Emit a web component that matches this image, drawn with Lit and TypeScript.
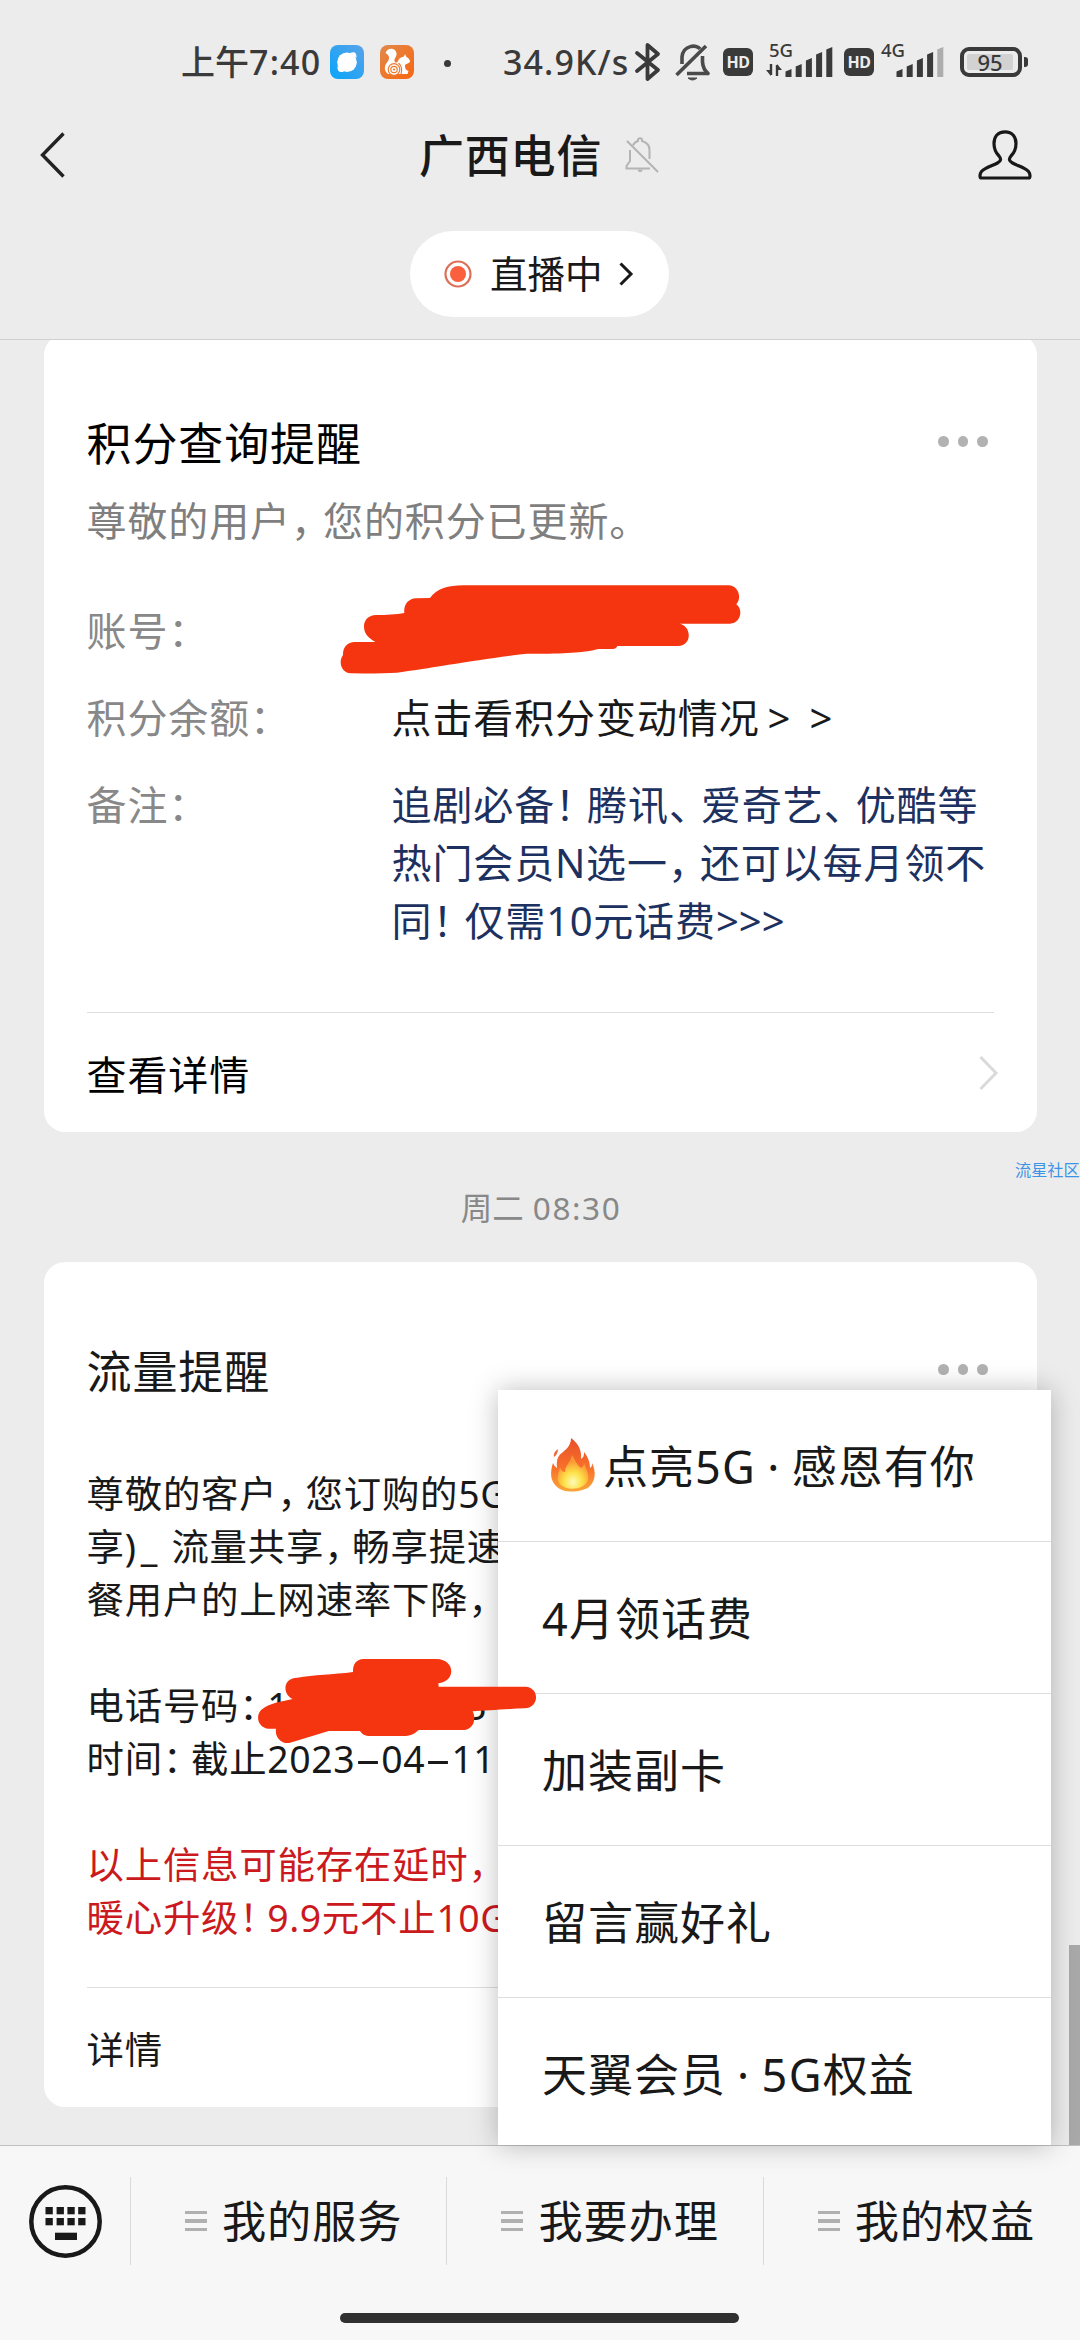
import { LitElement, html, svg, css } from "lit";
import { customElement } from "lit/decorators.js";

const PARTS = /([，、：！。]|-|[A-Za-z0-9.:()_/·]+|>+)/;

/** Splits mixed text so that punctuation is set tight and latin runs get their own face. */
const mix = (text: string) =>
  text.split(PARTS).map((part) => {
    if (!part) return "";
    if (/^[，、：！。]$/.test(part)) return html`<span class="p">${part}</span>`;
    if (part === "-") return html`<span class="l dash">-</span>`;
    if (part.includes("_")) return html`<span class="l loose">${part}</span>`;
    if (part.startsWith(">")) return html`<span class="l gt">${part}</span>`;
    if (PARTS.test(part)) return html`<span class="l">${part}</span>`;
    return part;
  });

const bars = (tops: number[], weak: number) =>
  tops.map(
    (top, i) =>
      svg`<path d="M${i * 10.2} ${top + 2.5} L${i * 10.2 + 6} ${top} V${30} H${i * 10.2} Z" fill=${i >= weak ? "#adadad" : "#3a3a3a"}/>`
  );

const FIELDS = [
  { label: "账号：", value: [""], cls: "" },
  { label: "积分余额：", value: ["点击看积分变动情况> >"], cls: "wide" },
  {
    label: "备注：",
    value: ["追剧必备！腾讯、爱奇艺、优酷等", "热门会员N选一，还可以每月领不", "同！仅需10元话费>>>"],
    cls: "link",
  },
];

const MENU = ["点亮5G · 感恩有你", "4月领话费", "加装副卡", "留言赢好礼", "天翼会员 · 5G权益"];
const TABS = ["我的服务", "我要办理", "我的权益"];

@customElement("app-root")
export class AppRoot extends LitElement {
  static styles = css`
    :host {
      display: flex;
      flex-direction: column;
      position: relative;
      width: 1080px;
      height: 2340px;
      overflow: hidden;
      background: #ececec;
      color: #191919;
      font-family: "Noto Sans CJK SC", "Noto Sans", sans-serif;
      white-space: nowrap;
    }
    * { box-sizing: border-box; }
    svg { display: block; flex: none; overflow: visible; }
    .p { letter-spacing: -0.2em; }
    .l { font-family: "Noto Sans", sans-serif; line-height: 0; letter-spacing: 0.015em; }
    .gt { letter-spacing: 0; }
    .loose { letter-spacing: 0.13em; }
    .dash { display: inline-block; width: 0.7em; text-align: center; transform: scaleX(2.2); letter-spacing: 0; }

    .header { height: 340px; flex: none; border-bottom: 1.5px solid #d0d0d0; }
    .status {
      display: flex;
      align-items: center;
      height: 124px;
      padding-left: 181px;
      color: #3a3a3a;
      font-size: 34px;
      font-weight: 500;
    }
    .clock { width: 149px; line-height: 50px; margin-top: -3px; }
    .clock .l { letter-spacing: 1.2px; }
    .app { margin-left: 16px; }
    .app.first { margin-left: 0; }
    .dot { width: 7px; height: 7px; border-radius: 50%; background: #3a3a3a; margin: 2px 52px 0 30px; }
    .speed { width: 130px; line-height: 50px; margin-top: -3px; }
    .speed .l { letter-spacing: 1.1px; }
    .hd {
      width: 30px;
      height: 28px;
      border-radius: 6px;
      background: #3a3a3a;
      color: #ececec;
      font: 700 16px/28px "Noto Sans", sans-serif;
      text-align: center;
      letter-spacing: -0.5px;
    }
    .signal { position: relative; width: 66px; height: 30px; }
    .signal .gen {
      position: absolute;
      top: -8px;
      font: 500 18.5px/22px "Noto Sans", sans-serif;
    }
    .battery {
      position: relative;
      width: 62px;
      height: 30px;
      border: 4px solid #3a3a3a;
      border-radius: 9px;
      padding: 3px;
      margin-left: 13px;
    }
    .level {
      width: 46px;
      height: 16px;
      background: #d2d2d2;
      border-radius: 2px;
      font: 500 22px/16px "Noto Sans", sans-serif;
      text-align: center;
    }
    .tip { width: 4px; height: 10px; border-radius: 0 3px 3px 0; background: #3a3a3a; margin-left: 2px; }

    .nav { display: flex; align-items: center; height: 62px; padding: 0 48px 0 40px; }
    .title { margin-left: 354px; font-size: 45px; line-height: 62px; font-weight: 500; letter-spacing: 0.8px; margin-top: -3px; }
    .mute { margin: 0 0 0 23px; }
    .person { margin-left: auto; }
    .live {
      display: flex;
      align-items: center;
      width: 259px;
      height: 86px;
      margin: 45px 0 0 410px;
      padding-left: 34px;
      border-radius: 43px;
      background: #fff;
      font-size: 37.5px;
    }
    .live span { margin: -4px 16px 0 18px; line-height: 50px; }

    .chat { flex: none; height: 1805px; overflow: hidden; display: flex; flex-direction: column; }
    .card {
      flex: none;
      width: 993px;
      margin-left: 43.5px;
      padding: 78px 43px 0;
      border-radius: 21px;
      background: #fff;
    }
    .card.one { margin-top: -6px; height: 798px; }
    .card.two { height: 845px; }
    .head { display: flex; justify-content: space-between; align-items: center; height: 60px; }
    .head h2 { margin: 0; font-size: 45px; font-weight: 400; line-height: 60px; letter-spacing: 0.9px; color: #000; }
    .two .head h2 { color: #191919; }
    .more { display: flex; gap: 9px; margin: 0 6px 1px 0; }
    .more i { width: 10.5px; height: 10.5px; border-radius: 50%; background: #b2b2b2; }
    .sub { margin-top: 19px; font-size: 40px; line-height: 56px; letter-spacing: 0.9px; color: #7f7f7f; }
    .fields { display: grid; gap: 29px; margin-top: 53px; font-size: 40px; line-height: 58px; letter-spacing: 0.9px; }
    .field { display: flex; min-height: 58px; }
    .label { width: 305px; color: #888; }
    .wide .l { margin-left: 8px; }
    .wide { word-spacing: 1px; }
    .link { color: #1d3160; }
    .foot {
      display: flex;
      align-items: center;
      justify-content: space-between;
      height: 120px;
      border-top: 1.5px solid #dedede;
      font-size: 40px;
      letter-spacing: 0.9px;
      color: #000;
    }
    .foot span { line-height: 56px; }
    .one .foot { margin-top: 64px; }
    .foot svg { margin-right: -4px; }
    .two .foot { margin-top: 44px; font-size: 37.4px; letter-spacing: 0.8px; color: #191919; }
    .time { flex: none; height: 40px; margin: 54px 0 36px; text-align: center; font-size: 31.5px; line-height: 40px; color: #888; word-spacing: 2px; }
    .time .l { letter-spacing: 1.6px; margin-right: -2px; }
    .body { margin-top: 66px; font-size: 37.4px; line-height: 53px; letter-spacing: 0.8px; }
    .line { height: 53px; }
    .body .p { letter-spacing: -0.25em; }
    .red { color: #cb1a1e; }
    .hidden-part { display: inline-block; width: 176px; }

    .footer {
      display: flex;
      height: 195px;
      flex: none;
      border-top: 1.5px solid #c0c0c0;
      background: #f7f7f7;
      padding: 31px 0 0 29px;
    }
    .kbd { width: 101px; padding-top: 8px; }
    .tab {
      display: flex;
      align-items: center;
      width: 316.4px;
      height: 88px;
      padding-left: 54px;
      border-left: 1.5px solid #dadada;
      font-size: 44.2px;
      letter-spacing: 0.9px;
    }
    .tab span { margin: -4px 0 0 15px; line-height: 60px; }
    .bars { display: grid; gap: 5.5px; width: 22px; }
    .bars i { height: 3.2px; background: #b0b0b0; }

    .menu {
      position: absolute;
      left: 498px;
      top: 1390px;
      width: 553px;
      height: 755px;
      background: #fff;
      box-shadow: 0 0 26px rgba(0, 0, 0, 0.26);
    }
    .item {
      display: flex;
      align-items: center;
      height: 152px;
      padding: 0 0 0 44px;
      border-bottom: 1.5px solid #dedede;
      font-size: 45px;
      letter-spacing: 1px;
    }
    .item:last-child { border-bottom: 0; }
    .item span.txt { line-height: 60px; margin-top: -2px; }
    .item .l { letter-spacing: 0.03em; }
    .fire { margin: 0 8px 2px 9px; }
    .scroll { position: absolute; left: 1069px; top: 1945px; width: 11px; height: 200px; background: #a9a9a9; }
    .mark { position: absolute; left: 1015px; top: 1157px; font-size: 16.2px; line-height: 24px; color: #3d94e6; }
    .scribble { position: absolute; }
    .s1 { left: 320px; top: 560px; }
    .s2 { left: 240px; top: 1640px; }
    .home { position: absolute; left: 340px; top: 2313px; width: 399px; height: 10px; border-radius: 5px; background: #303030; }
  `;

  private renderStatus() {
    return html`<div class="status">
      <div class="clock">上午<span class="l">7:40</span></div>
      <svg class="app first" width="34" height="34" viewBox="0 0 34 34">
        <defs><linearGradient id="b" x1="1" y1="0" x2="0" y2="1"><stop offset="0" stop-color="#5aa2e8"/><stop offset="1" stop-color="#08a5fa"/></linearGradient></defs>
        <rect width="34" height="34" rx="8" fill="url(#b)"/>
        <circle cx="17" cy="17.3" r="9.8" fill="#fff"/>
        <path d="M20 8 Q27 5 26.500 13 Z M14 26.500 Q7 29 7.500 21 Z" fill="#fff"/>
      </svg>
      <svg class="app" width="34" height="34" viewBox="0 0 34 34">
        <defs><linearGradient id="o" x1="0" y1="0" x2="1" y2="1"><stop offset="0" stop-color="#e08a4a"/><stop offset="1" stop-color="#f9660f"/></linearGradient></defs>
        <rect width="34" height="34" rx="8" fill="url(#o)"/>
        <path d="M5.500 8 C7 3 15 2 16.500 8 C17 12 14 13 14.500 16 C15 18 17 18 18 16 C19 13 22 12 24 11.500 L25 9 L26.500 12 C29 13 30 15 30 17 C28 19 26 18.500 25 20 C25 24 26 25 28.500 26 L27.500 29 H8 C4 26 4 21 7 17.500 C9 15 11 11 5.500 8Z" fill="#fff"/>
        <circle cx="14" cy="24.500" r="5.800" fill="#fff" stroke="#ee7a2e" stroke-width="1.200"/>
        <circle cx="14" cy="24.500" r="3.200" fill="none" stroke="#ee7a2e" stroke-width="1.200"/>
        <circle cx="14" cy="24.500" r="1.100" fill="#ee7a2e"/>
        <path d="M18.500 18 Q23 22 21 29" fill="none" stroke="#ee7a2e" stroke-width="1.100"/>
      </svg>
      <div class="dot"></div>
      <div class="speed"><span class="l">34.9K/s</span></div>
      <svg width="26" height="38" viewBox="0 0 26 38" style="margin-left:2px" fill="none" stroke="#3a3a3a" stroke-width="3.800" stroke-linejoin="round" stroke-linecap="round">
        <path d="M2 10 L23 27 L12.500 36 V2 L23 11 L2 28"/>
      </svg>
      <svg width="35" height="37" viewBox="0 0 35 37" style="margin-left:14px" fill="none" stroke="#4a4a4a" stroke-width="3.600" stroke-linejoin="round">
        <path d="M7 20 V13 C8 1 22 0 25 5"/>
        <path d="M27.500 12 V18 C28 24 30 27 33 29.500 H12"/>
        <path d="M1.500 31 L31 2"/>
        <path d="M13 34 H22 Q17.500 38 13 34Z" fill="#4a4a4a" stroke-width="1"/>
      </svg>
      <div class="hd" style="margin-left:13px">HD</div>
      <div class="signal" style="margin-left:13px">
        <span class="gen" style="left:3px">5G</span>
        <svg width="66" height="30" viewBox="0 0 66 30">
          <path d="M5 17 V28 M11 29 V18" stroke="#3a3a3a" stroke-width="2.400"/>
          <path d="M0 23 H5 V29Z M11 17 L16 23 H11Z" fill="#3a3a3a"/>
          <g transform="translate(19.500 0)">${bars([22, 17, 11, 5, 0], 9)}</g>
        </svg>
      </div>
      <div class="hd" style="margin-left:12px">HD</div>
      <div class="signal" style="margin-left:7px">
        <span class="gen" style="left:0">4G</span>
        <svg width="66" height="30" viewBox="0 0 66 30"><g transform="translate(15.500 0)">${bars([22, 17, 11, 5, 0], 4)}</g></svg>
      </div>
      <div class="battery"><div class="level">95</div></div>
      <div class="tip"></div>
    </div>`;
  }

  private renderHeader() {
    return html`<div class="header">
      ${this.renderStatus()}
      <div class="nav">
        <svg width="25" height="46" viewBox="0 0 25 46" fill="none" stroke="#222" stroke-width="3.400"><path d="M23.500 1.500 L2.500 23 L23.500 44.500"/></svg>
        <div class="title">广西电信</div>
        <svg class="mute" width="34" height="36" viewBox="0 0 34 36" fill="none" stroke="#b4b4b4" stroke-width="2">
          <path d="M8 8.500 C9 5.500 11.500 4.500 13 4 V3 C13 0.500 17 0.500 17 3 V4 C22 5.500 24.500 9 24.500 13 V22"/>
          <path d="M5 13 V24 L1.500 29 V31.500 H25"/>
          <path d="M13.500 32.500 Q15 36 17 32.500"/>
          <path d="M2 4 L33 35"/>
        </svg>
        <svg class="person" width="54" height="50" viewBox="0 0 54 50" fill="none" stroke="#181818" stroke-width="3.200" stroke-linejoin="round">
          <path d="M27 1.800 C19.500 1.800 16 7 16 13.500 C16 19 18 23 21 26 C23.500 29 23 31 19.500 33 C14 36 7 37.500 3.500 41.500 C1.500 44 1.500 48 3.500 48 H50.500 C52.500 48 52.500 44 50.500 41.500 C47 37.500 40 36 34.500 33 C31 31 30.500 29 33 26 C36 23 38 19 38 13.500 C38 7 34.500 1.800 27 1.800Z"/>
        </svg>
      </div>
      <div class="live">
        <svg width="28" height="28" viewBox="0 0 28 28"><circle cx="14" cy="14" r="12.500" fill="#fff" stroke="#dd6f58" stroke-width="2.200"/><circle cx="14" cy="14" r="8" fill="#fa5f3e"/></svg>
        <span>直播中</span>
        <svg width="14" height="24" viewBox="0 0 14 24" fill="none" stroke="#191919" stroke-width="3"><path d="M1.500 1.500 L12 12 L1.500 22.500"/></svg>
      </div>
    </div>`;
  }

  render() {
    return html`
      ${this.renderHeader()}
      <div class="chat">
        <div class="card one">
          <div class="head"><h2>积分查询提醒</h2><div class="more"><i></i><i></i><i></i></div></div>
          <div class="sub">${mix("尊敬的用户，您的积分已更新。")}</div>
          <div class="fields">
            ${FIELDS.map(
              (f) => html`<div class="field"><div class="label">${mix(f.label)}</div><div class=${f.cls}>${f.value.map((v) => html`<div>${mix(v)}</div>`)}</div></div>`
            )}
          </div>
          <div class="foot">
            <span>查看详情</span>
            <svg width="19" height="34" viewBox="0 0 19 34" fill="none" stroke="#dadada" stroke-width="3"><path d="M1.500 1 L17 17 L1.500 33"/></svg>
          </div>
        </div>
        <div class="time">周二 <span class="l">08:30</span></div>
        <div class="card two">
          <div class="head"><h2>流量提醒</h2><div class="more"><i></i><i></i><i></i></div></div>
          <div class="body">
            <div class="line">${mix("尊敬的客户，您订购的5G")}</div>
            <div class="line">${mix("享)_ 流量共享，畅享提速")}</div>
            <div class="line">${mix("餐用户的上网速率下降，")}</div>
            <div class="line"></div>
            <div class="line">${mix("电话号码：1")}<span class="hidden-part"></span><span class="l">3</span></div>
            <div class="line">${mix("时间：截止2023-04-11 0")}</div>
            <div class="line"></div>
            <div class="line red">${mix("以上信息可能存在延时，")}</div>
            <div class="line red">${mix("暖心升级！9.9元不止10G")}</div>
          </div>
          <div class="foot"><span>详情</span></div>
        </div>
      </div>
      <div class="footer">
        <div class="kbd">
          <svg width="73" height="73" viewBox="0 0 73 73" fill="#191919">
            <circle cx="36.500" cy="36.500" r="34.200" fill="none" stroke="#191919" stroke-width="4.500"/>
            ${[22, 33].map((y) => [16.5, 27.6, 38.4, 49.2].map((x) => svg`<rect x=${x} y=${y} width="7.300" height="7.300"/>`))}
            <rect x="26" y="47.700" width="22" height="7.300"/>
          </svg>
        </div>
        ${TABS.map((t) => html`<div class="tab"><div class="bars"><i></i><i></i><i></i></div><span>${t}</span></div>`)}
      </div>
      <div class="scroll"></div>
      <div class="menu">
        ${MENU.map(
          (m, i) => html`<div class="item">${i === 0
            ? html`<svg class="fire" width="44" height="54" viewBox="0 0 44 54">
                <defs>
                  <linearGradient id="f" x1="0" y1="0" x2="0" y2="1"><stop offset="0" stop-color="#e8502a"/><stop offset=".55" stop-color="#f8702a"/><stop offset="1" stop-color="#f9a638"/></linearGradient>
                  <radialGradient id="g" cx=".5" cy=".8" r=".6"><stop offset="0" stop-color="#fffbb8"/><stop offset=".5" stop-color="#fde047"/><stop offset="1" stop-color="#fb9a35"/></radialGradient>
                </defs>
                <path d="M20 0 C27 5 31 12 30 21 C33 19 33 17 33 14 C38 20 39 26 39 30 C41 29 41 27 41 25 C45 33 45 43 38 49 C32 54 13 56 6 49 C-1 43 -1 34 2 25 C3 27 4 29 6 30 C5 20 8 17 12 14 C17 10 20 6 20 0Z" fill="url(#f)"/>
                <path d="M21 17 C24 22 26 27 30 30 C32 29 33 27 33 25 C36 32 38 37 37 42 C34 53 11 54 7 43 C6 38 8 34 9 29 C10 33 12 34 14 34 C14 27 20 24 21 17Z" fill="url(#g)"/>
                <path d="M3 19 Q2 14 7 11 Q7 16 3 19Z" fill="#ee6a3a"/>
              </svg>`
            : ""}<span class="txt">${mix(m)}</span></div>`
        )}
      </div>
      <div class="mark">流星社区</div>
      <svg class="scribble s1" width="440" height="130" viewBox="0 0 1320 390">
        <path fill="#f53510" d="M330 114 C350 86 385 76 430 76 H1226 C1252 76 1268 110 1249 133 C1272 150 1260 191 1230 191 H1078 C1115 196 1118 258 1074 258 H892 Q888 268 876 267 H836 C790 278 740 282 620 281 C480 297 330 325 230 338 Q180 341 92 340 C64 338 54 306 69 285 C68 262 82 246 104 246 H166 C142 232 132 220 132 199 C132 180 146 165 168 165 Q215 165 253 159 C250 133 266 116 288 115 Z"/>
      </svg>
      <svg class="scribble s2" width="320" height="120" viewBox="0 0 960 360">
        <path fill="#f53510" d="M339 96 C338 72 350 58 370 57 H590 C645 58 650 123 595 130 L596 140 H856 C900 142 898 204 855 205 C800 207 740 212 698 214 C712 244 694 270 672 270 H536 C520 284 510 288 490 288 H392 C374 288 366 282 360 273 H266 L148 309 C122 312 104 290 108 266 H86 C54 264 44 226 66 208 C92 188 120 186 158 177 C128 164 126 114 172 113 C220 104 280 104 339 96Z"/>
      </svg>
      <div class="home"></div>
    `;
  }
}
